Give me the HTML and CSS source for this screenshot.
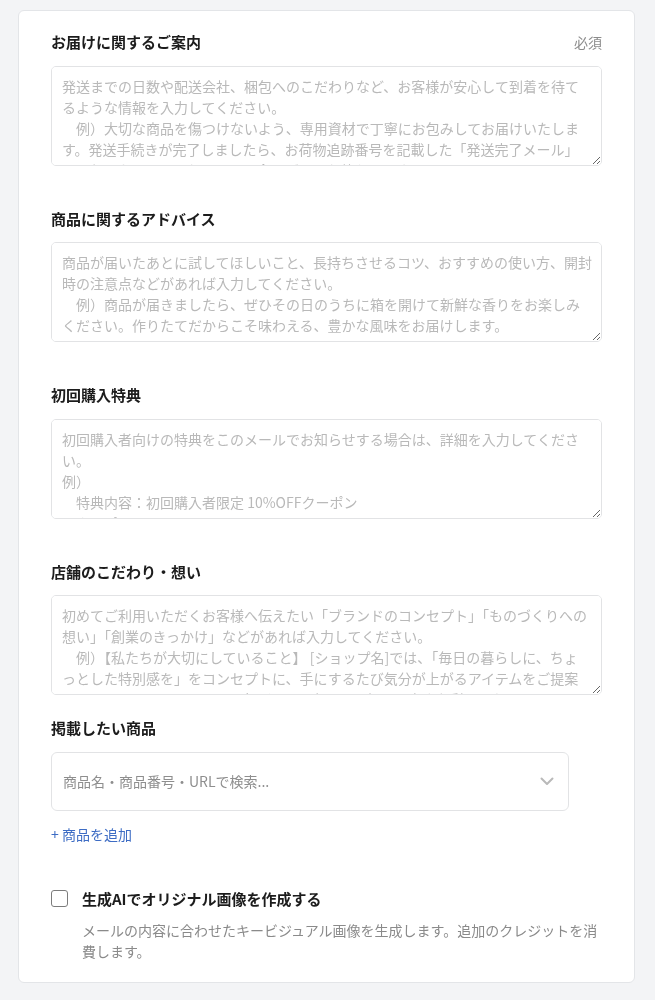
FILE: index.html
```html
<!DOCTYPE html>
<html lang="ja">
<head>
<meta charset="utf-8">
<title>メール設定</title>
<link rel="stylesheet" href="styles.css">
</head>
<body>
<div class="page">
  <form class="card">
    <div class="field field-text">
      <div class="field-head">
        <label class="label" for="t1">お届けに関するご案内</label>
        <span class="req">必須</span>
      </div>
      <textarea id="t1" class="ta" placeholder="発送までの日数や配送会社、梱包へのこだわりなど、お客様が安心して到着を待て&#10;るような情報を入力してください。&#10;　例）大切な商品を傷つけないよう、専用資材で丁寧にお包みしてお届けいたしま&#10;す。発送手続きが完了しましたら、お荷物追跡番号を記載した「発送完了メール」&#10;を配信いたします。お届けまで今しばらくお待ちくださいませ。"></textarea>
    </div>

    <div class="field field-text">
      <div class="field-head">
        <label class="label" for="t2">商品に関するアドバイス</label>
      </div>
      <textarea id="t2" class="ta" placeholder="商品が届いたあとに試してほしいこと、長持ちさせるコツ、おすすめの使い方、開封&#10;時の注意点などがあれば入力してください。&#10;　例）商品が届きましたら、ぜひその日のうちに箱を開けて新鮮な香りをお楽しみ&#10;ください。作りたてだからこそ味わえる、豊かな風味をお届けします。"></textarea>
    </div>

    <div class="field field-text">
      <div class="field-head">
        <label class="label" for="t3">初回購入特典</label>
      </div>
      <textarea id="t3" class="ta" placeholder="初回購入者向けの特典をこのメールでお知らせする場合は、詳細を入力してくださ&#10;い。&#10;例）&#10;　特典内容：初回購入者限定 10%OFFクーポン&#10;　クーポンコード：WELCOME10"></textarea>
    </div>

    <div class="field field-text field-last">
      <div class="field-head">
        <label class="label" for="t4">店舗のこだわり・想い</label>
      </div>
      <textarea id="t4" class="ta" placeholder="初めてご利用いただくお客様へ伝えたい「ブランドのコンセプト」「ものづくりへの&#10;想い」「創業のきっかけ」などがあれば入力してください。&#10;　例）【私たちが大切にしていること】 [ショップ名]では、「毎日の暮らしに、ちょ&#10;っとした特別感を」をコンセプトに、手にするたび気分が上がるアイテムをご提案&#10;しています。ひとつひとつ丁寧に選んだ商品で、毎日に小さな彩りをお届けします。"></textarea>
    </div>

    <div class="field">
      <div class="field-head">
        <label class="label" for="p1">掲載したい商品</label>
      </div>
      <div class="product-row">
        <div class="search">
          <input id="p1" class="search-input" type="text" placeholder="商品名・商品番号・URLで検索...">
          <svg class="chevron" width="14" height="9" viewBox="0 0 14 9" aria-hidden="true">
            <path d="M1.5 1.5 L7 7 L12.5 1.5" fill="none" stroke="#b9b9b9" stroke-width="2" stroke-linecap="round" stroke-linejoin="round"/>
          </svg>
        </div>
      </div>
      <a class="add-link" href="#">+ 商品を追加</a>
    </div>

    <div class="ai">
      <label class="check-row">
        <input type="checkbox" class="check">
        <span class="check-label">生成AIでオリジナル画像を作成する</span>
      </label>
      <p class="ai-desc">メールの内容に合わせたキービジュアル画像を生成します。追加のクレジットを消費します。</p>
    </div>
  </form>
</div>
</body>
</html>
```

FILE: styles.css
```css
html, body {
  margin: 0;
  background: #f3f4f6;
}

body {
  font-family: "Noto Sans CJK JP", "Noto Sans", sans-serif;
  color: #1f1f1f;
}

.page {
  padding: 10px 20px 16px 18px;
}

.card {
  display: block;
  background: #ffffff;
  border: 1px solid #e3e5e8;
  border-radius: 6px;
  padding: 20px 32px;
}

.field-text {
  margin-bottom: 42px;
}

.field-text.field-last {
  margin-bottom: 22px;
}

.field-head {
  display: flex;
  justify-content: space-between;
  align-items: center;
  margin-bottom: 12px;
}

.label {
  font-size: 15px;
  line-height: 22.5px;
  font-weight: 700;
  color: #1c1c1c;
}

.req {
  font-size: 14px;
  line-height: 22.5px;
  color: #8c8c8c;
}

.ta {
  display: block;
  width: 100%;
  box-sizing: border-box;
  height: 100px;
  margin: 0;
  padding: 9px 4px 9px 10px;
  border: 1px solid #e2e3e5;
  border-radius: 5px;
  font-family: "Noto Sans CJK JP", "Noto Sans", sans-serif;
  font-size: 14px;
  line-height: 21px;
  color: #333333;
  background: #ffffff;
  resize: vertical;
  outline: none;
}

.ta::placeholder {
  color: #b9b9b9;
}

.product-row {
  display: flex;
  padding-right: 33px;
}

.search {
  flex: 1;
  display: flex;
  align-items: center;
  height: 59px;
  box-sizing: border-box;
  border: 1px solid #e2e3e5;
  border-radius: 6px;
  padding: 0 14px 0 11px;
  background: #ffffff;
}

.search-input {
  flex: 1;
  min-width: 0;
  border: 0;
  outline: none;
  padding: 0;
  margin: 0;
  font-family: "Noto Sans CJK JP", "Noto Sans", sans-serif;
  font-size: 14px;
  line-height: 21px;
  color: #333333;
  background: transparent;
}

.search-input::placeholder {
  color: #8e8e8e;
}

.chevron {
  flex: none;
  display: block;
}

.add-link {
  display: inline-block;
  margin-top: 13px;
  font-size: 14px;
  line-height: 21px;
  color: #3d6cc4;
  text-decoration: none;
}

.ai {
  margin-top: 43px;
}

.check-row {
  display: flex;
  align-items: center;
  gap: 14px;
}

.check {
  appearance: none;
  -webkit-appearance: none;
  flex: none;
  width: 17px;
  height: 17px;
  margin: 0;
  box-sizing: border-box;
  border: 1.5px solid #7c7c7c;
  border-radius: 3px;
  background: #ffffff;
}

.check-label {
  font-size: 15px;
  line-height: 22.5px;
  font-weight: 700;
  color: #1c1c1c;
}

.ai-desc {
  margin: 10px 0 0 31px;
  font-size: 14px;
  line-height: 21px;
  color: #8a8a8a;
}
```
